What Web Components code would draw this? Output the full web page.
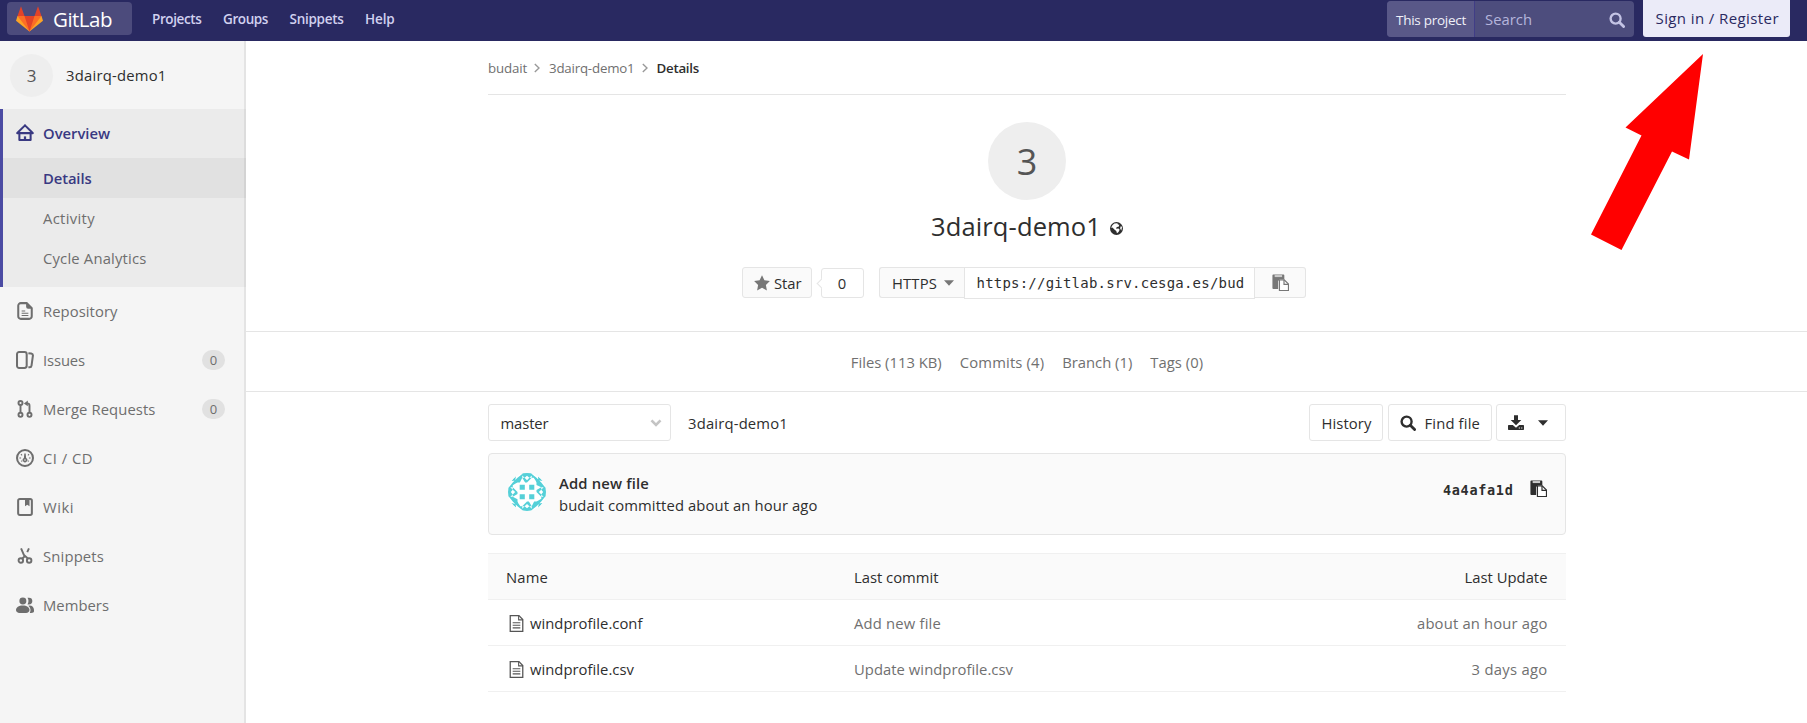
<!DOCTYPE html>
<html lang="en">
<head>
<meta charset="utf-8">
<title>3dairq-demo1</title>
<style>
html,body{margin:0;height:100%;overflow:hidden;background:#fff}
body{font-family:"Open Sans","Noto Sans",sans-serif;font-size:14.800px;color:#2e2e2e}
</style>
</head>
<body>
<project-page></project-page>
<script>
const define = (name, html, setup) => {
  const tpl = document.createElement('template');
  tpl.innerHTML = html;
  customElements.define(name, class extends HTMLElement {
    connectedCallback() {
      if (this.shadowRoot) return;
      this.attachShadow({ mode: 'open' }).append(tpl.content.cloneNode(true));
      if (setup) setup(this, this.shadowRoot);
    }
  });
};

const ICONS = {
  home: '<path d="M8 1.2 1.8 7.3M8 1.2l6.200 6.100M1 8.100h14M3 8v6.200h10V8" fill="none" stroke="currentColor" stroke-width="1.800" stroke-linecap="round" stroke-linejoin="round"/><path d="M7 14v-3h2v3z"/>',
  doc: '<path fill="none" stroke="currentColor" stroke-width="1.800" d="M4.300 1h5.200L14 5.400v7.300a2.300 2.300 0 0 1-2.300 2.300H4.300A2.300 2.300 0 0 1 2 12.700V3.300A2.300 2.300 0 0 1 4.300 1z"/><path d="M9 1v3.300A1.700 1.700 0 0 0 10.700 6H14v-.8L9.800 1z"/><path d="M5 8h3.200M5 10h6M5 12h6" stroke="currentColor" stroke-width=".9"/>',
  issues: '<rect x=".9" y=".9" width="8.600" height="14.200" rx="1.900" fill="none" stroke="currentColor" stroke-width="1.800"/><path d="M11 1.900l2.500.4c1 .2 1.700 1 1.500 2L13.800 13c-.1.900-.8 1.500-1.600 1.500H11" fill="none" stroke="currentColor" stroke-width="1.800"/>',
  merge: '<g fill="none" stroke="currentColor" stroke-width="1.700"><circle cx="4" cy="2.700" r="1.800"/><circle cx="4" cy="13.200" r="1.800"/><circle cx="12" cy="13.200" r="1.800"/><path d="M4 4.500v7M12 11.400V5a2 2 0 0 0-2-2H9"/></g><path d="M7 3l3.500-2.600v5.200z"/>',
  gauge: '<circle cx="8" cy="8" r="7.100" fill="none" stroke="currentColor" stroke-width="1.800"/><path d="M7.400 4h1.200l.4 4a2 2 0 1 1-2 0z"/><circle cx="8" cy="9.700" r=".7" fill="#f5f5f5"/><path d="M3 8h1.500M11.500 8H13M4.400 4.600l1 1M11.600 4.600l-1 1M4.600 11l1-.6M11.400 11l-1-.6" stroke="currentColor" stroke-width=".9"/>',
  book: '<rect x="1.900" y=".9" width="12.200" height="14.200" rx="1.500" fill="none" stroke="currentColor" stroke-width="1.800"/><path d="M8 1h4v6.400L10 6 8 7.400z"/>',
  scissors: '<g fill="none" stroke="currentColor" stroke-width="1.700"><circle cx="4.300" cy="12" r="2"/><circle cx="11.700" cy="12" r="2"/><path d="M4.500 1.200 7 7l3.800 3.500M11.500 1.200 10 4.500M8 8l-2.800 2.600"/></g>',
  members: '<path d="M11.500 7.500a2.700 2.700 0 0 0 0-6h-1.300c1.200 1.800 1.200 4.200 0 6zM12 8.500c2.500 0 4 1.600 4 4v1c0 .9-1 1.500-2.500 1.500h-1.200c1.200-2.500.6-5-1.300-6.400z"/><circle cx="6.100" cy="4.400" r="3.100"/><path d="M6 8.500c3.600 0 6 1.700 6 4 0 1.700-1.400 2.500-3 2.500H3c-1.600 0-3-.8-3-2.500 0-2.300 2.400-4 6-4z"/>',
  search: '<circle cx="6.600" cy="6.600" r="5" fill="none" stroke="currentColor" stroke-width="2.400"/><path d="M10.300 10.300l4.300 4.300" stroke="currentColor" stroke-width="2.800" stroke-linecap="round"/>',
  star: '<path d="M8 .2l2.400 5 5.500.8-4 3.900 1 5.500L8 12.800l-4.900 2.600 1-5.500L.1 6l5.500-.8z"/>',
  globe: '<circle cx="8" cy="8" r="8"/><path d="M5.400 1.800 9 1.500l.8 1.600 1.700.3-.9 2.400-2.300.2-.8 2.200 3-.3 1.400 1.500-1.400 2.900-1.900 1.500-.9-2.700-2-1.600L3 6.900 1.600 7.500c.2-2.200 1.700-4.500 3.800-5.700zM13.500 4.600l1.300 2.200-1 3.800-1.400-3z" fill="#fff"/>',
  paste: '<path d="M1.200.5h9.600c.5 0 .8.300.8.800V5H7.500L5.800 6.700V14H1.200c-.5 0-.8-.3-.8-.8V1.300c0-.5.300-.8.800-.8z"/><path d="M2.500 1h7v1.900h-7z" fill="#ccc"/><path d="M7 5.500h4.500l4 4v6H7z" fill="#fff" stroke="currentColor" stroke-width="1.100"/><path d="M11.300 5.500v4.200h4.200" fill="none" stroke="currentColor" stroke-width="1.100"/>',
  download: '<path d="M6 .3h4V5h3.300L8 10.300 2.700 5H6z"/><path d="M.7 10h4.100L8 12.800 11.200 10h4.100c.4 0 .7.300.7.700v3.600c0 .4-.3.700-.7.700H.7a.7.700 0 0 1-.7-.7v-3.600c0-.4.300-.7.700-.7z"/><path d="M10.800 12.500h1.100v1.100h-1.100zm2.400 0h1.100v1.100h-1.100z" fill="#fff"/>',
  caret: '<path d="M0 3.500h16l-8 9z"/>',
  chevdown: '<path d="M2 4.500l6 6 6-6" fill="none" stroke="currentColor" stroke-width="3.600"/>',
  chevright: '<path d="M4.500 1.500 11.200 8l-6.700 6.500" fill="none" stroke="currentColor" stroke-width="2.200"/>',
  file: '<path d="M2.100.6h8.200l3.600 3.700v11.100H2.100z" fill="none" stroke="currentColor" stroke-width="1.200"/><path d="M10 .5v4.100h4" fill="none" stroke="currentColor"/><path d="M4.400 7.300h7.200M4.400 9.700h7.200M4.400 12.100h7.200" stroke="currentColor"/>'
};
define('gl-icon', '<style>:host{display:inline-block;flex:none;line-height:0}svg{display:block;width:100%;height:100%;fill:currentColor}</style>', (el, root) => {
  const s = el.getAttribute('size') || 16;
  el.style.width = el.style.height = s + 'px';
  root.innerHTML += '<svg viewBox="0 0 16 16">' + ICONS[el.getAttribute('name')] + '</svg>';
});

/* One line of text, tracked so that it fills the width given in w. */
define('fit-text', '<style>:host{display:block;flex:none;white-space:nowrap}span{display:inline-block}</style><span></span>', (el, root) => {
  const span = root.querySelector('span'), w = +el.getAttribute('w') + 1;
  span.textContent = el.getAttribute('text');
  const n = span.textContent.length;
  const gap = (w - span.getBoundingClientRect().width) / n;
  span.style.letterSpacing = gap.toFixed(3) + 'px';
  el.style.width = w + 'px';
});

define('gl-button', `<style>:host{display:flex;box-sizing:border-box;align-items:center;border:1px solid #e5e5e5;border-radius:3px;background:#fff}</style><slot></slot>`);

define('gl-navbar', `<style>
:host{display:flex;box-sizing:border-box;height:41px;background:#292961;color:#d1d1f0;padding:0 17px 0 7px;align-items:flex-start}
.brand{display:flex;align-items:center;box-sizing:border-box;width:125px;height:33px;margin-top:2px;padding-left:9px;border-radius:4px;background:#4c4b7c;color:#fff}
.brand svg{width:27px;height:26px;margin-right:10px}
.brand fit-text{font-size:20.500px;line-height:30px;margin-top:0}
nav{display:flex;gap:21.500px;margin-left:20px;padding-top:8px;font-weight:600;font-size:13.500px;line-height:22px}
.search{display:flex;width:247px;height:36px;margin:1px 9px 0 auto;border-radius:4px;overflow:hidden;background:#4d4d7d;align-items:center;line-height:22px}
.scope{display:flex;align-items:center;box-sizing:border-box;width:88px;height:36px;padding:2px 0 0 9px;background:#595888;border-right:1px solid #403d86;color:#f0f0f8;font-size:13.500px}
.q{margin:0 0 1px 10px;color:#b5b5dc}.search gl-icon{margin-left:auto;margin-right:9px;margin-top:1px;color:#c3c3e4}
.sign{box-sizing:border-box;width:147px;height:37px;padding:7px 0 0 12.500px;background:#ebebf8;color:#292961;border-radius:0 0 3px 3px;font-size:15px;line-height:22px}
</style>
<div class="brand"><svg viewBox="0 0 27 26"><path fill="#fca326" d="M1.500 10 0 14.800l13.500 10.700L27 14.800 25.500 10z"/><path fill="#fc6d26" d="M1.500 10h24L13.500 25.500z"/><path fill="#e24329" d="M8.500 10h10l-5 15.500zM1.500 10 5 .3 8.500 10zM18.500 10 22 .3 25.500 10z"/></svg><fit-text w="58" text="GitLab"></fit-text></div>
<nav><fit-text w="48.500" text="Projects"></fit-text><fit-text w="44" text="Groups"></fit-text><fit-text w="53" text="Snippets"></fit-text><fit-text w="28.500" text="Help"></fit-text></nav>
<div class="search"><div class="scope"><fit-text w="69" text="This project"></fit-text></div><fit-text class="q" w="46" text="Search"></fit-text><gl-icon name="search" size="16"></gl-icon></div>
<div class="sign"><fit-text w="122.500" text="Sign in / Register"></fit-text></div>`);

define('side-item', `<style>
:host{display:flex;height:49px;align-items:center;padding:0 21px 1px 16px;box-sizing:border-box;color:#6e6e6e}
:host([active]){color:#393982;font-weight:600}
.icon{display:flex;margin-right:9px}.label{display:flex;flex:1;line-height:20px;padding-bottom:1px}
.badge{display:flex;align-items:center;justify-content:center;width:23px;height:20px;border-radius:10px;background:#e1e1e1;font-size:13px}
</style><div class="icon"></div><div class="label"></div>`, (el, root) => {
  const a = n => el.getAttribute(n);
  root.querySelector('.icon').innerHTML = `<gl-icon size="18" name="${a('icon')}"></gl-icon>`;
  root.querySelector('.label').innerHTML = `<fit-text w="${a('w')}" text="${a('label')}"></fit-text>`;
  if (el.hasAttribute('count')) {
    const b = document.createElement('span');
    b.className = 'badge';
    b.textContent = a('count');
    root.append(b);
  }
});
define('side-sub', `<style>:host{display:flex;height:40px;align-items:center;padding-left:40px;color:#6e6e6e}
:host([active]){background:#e1e1e1;color:#393982;font-weight:600;box-shadow:inset -2px 0 #d3d3d3}</style><slot></slot>`);

define('gl-sidebar', `<style>
:host{display:block;box-sizing:border-box;width:246px;background:#f5f5f5;box-shadow:inset -2px 0 #e4e4e4}
.head{display:flex;align-items:center;height:68px;box-sizing:border-box;padding-left:10px;font-weight:500}
.av{width:43px;height:43px;border-radius:50%;background:#eee;color:#555;font-size:17px;font-weight:400;text-align:center;line-height:43px;margin-right:13px}
.group{background:rgba(0,0,0,.04);border-left:3px solid #4b4ba3;padding-bottom:9px;box-shadow:inset -2px 0 #dcdcdc}
.group side-item{padding-left:13px}
</style>
<div class="head"><div class="av">3</div><fit-text w="99.500" text="3dairq-demo1"></fit-text></div>
<div class="group"><side-item active icon="home" label="Overview" w="66"></side-item>
<side-sub active><fit-text w="47.500" text="Details"></fit-text></side-sub>
<side-sub><fit-text w="51" text="Activity"></fit-text></side-sub>
<side-sub><fit-text w="102.500" text="Cycle Analytics"></fit-text></side-sub></div>
<side-item icon="doc" label="Repository" w="73.500"></side-item>
<side-item icon="issues" label="Issues" w="41" count="0"></side-item>
<side-item icon="merge" label="Merge Requests" w="111.500" count="0"></side-item>
<side-item icon="gauge" label="CI / CD" w="49"></side-item>
<side-item icon="book" label="Wiki" w="30"></side-item>
<side-item icon="scissors" label="Snippets" w="60"></side-item>
<side-item icon="members" label="Members" w="65"></side-item>`);

define('gl-crumbs', `<style>:host{display:flex;align-items:center;height:54px;box-sizing:border-box;border-bottom:1px solid #e5e5e5;font-size:13.300px;color:#707070}
gl-icon{margin:0 7px 0 5px;color:#999}.on{color:#2e2e2e;font-weight:600}</style>
<fit-text w="38" text="budait"></fit-text><gl-icon name="chevright" size="10"></gl-icon><fit-text w="84.500" text="3dairq-demo1"></fit-text><gl-icon name="chevright" size="10"></gl-icon><fit-text class="on" w="41.500" text="Details"></fit-text>`);

define('project-home', `<style>
:host{display:flex;flex-direction:column;align-items:center;height:236px;box-sizing:border-box;padding-top:27px}
.av{width:78px;height:78px;border-radius:50%;background:#eee;color:#555;font-size:36px;line-height:79px;text-align:center}
.title{display:flex;align-items:center;height:36px;margin-top:8px;font-size:25.500px}
.title gl-icon{margin:5px 0 0 9px}
.row{display:flex;align-items:flex-start;margin-top:23px;margin-right:7px}
gl-button{height:31px;background:#fafafa}
.star{width:70px;padding-left:11px;gap:4.500px}.star gl-icon{color:#777}
.count{position:relative;width:43px;height:30px;margin:1px 15px 0 9px;justify-content:center;background:#fff;line-height:1}
.count::before{content:"";position:absolute;left:-4px;top:11px;width:6px;height:6px;background:#fff;border:1px solid #e5e5e5;border-width:0 0 1px 1px;transform:rotate(45deg)}
.http{width:85px;padding-left:12.500px;gap:7px;border-radius:3px 0 0 3px;border-right:0}.http gl-icon{color:#777}
.url{display:flex;align-items:center;box-sizing:border-box;width:291px;height:32px;border:1px solid #e5e5e5;padding-left:12px;font:14px "DejaVu Sans Mono",monospace}
.copy{width:51px;border-radius:0 3px 3px 0;border-left:0;padding-left:17px;color:#777}
</style>
<div class="av">3</div>
<div class="title"><fit-text w="169" text="3dairq-demo1"></fit-text><gl-icon name="globe" size="13"></gl-icon></div>
<div class="row"><gl-button class="star"><gl-icon name="star" size="16"></gl-icon><fit-text w="26.500" text="Star"></fit-text></gl-button>
<gl-button class="count">0</gl-button>
<gl-button class="http"><fit-text w="44" text="HTTPS"></fit-text><gl-icon name="caret" size="10"></gl-icon></gl-button>
<div class="url"><fit-text w="267" text="https://gitlab.srv.cesga.es/bud"></fit-text></div>
<gl-button class="copy"><gl-icon name="paste" size="17"></gl-icon></gl-button></div>`);

define('project-stats', `<style>:host{display:flex;justify-content:center;align-items:center;gap:18px;height:61px;box-sizing:border-box;border:1px solid #e5e5e5;border-width:1px 0;color:#707070;line-height:20px;padding:1px 0 0 1px}</style>
<fit-text w="90" text="Files (113 KB)"></fit-text><fit-text w="83.500" text="Commits (4)"></fit-text><fit-text w="69" text="Branch (1)"></fit-text><fit-text w="52" text="Tags (0)"></fit-text>`);

define('tree-controls', `<style>:host{display:flex;height:37px;margin-top:12px}
gl-button{height:37px}
.ref{width:183px;padding:1px 8px 0 11.500px;justify-content:space-between}.ref gl-icon{color:#c4c4c4}
.path{display:flex;align-items:center;margin:1px auto 0 17px}
.his{width:74px;padding:1px 0 0 11.500px;margin-right:5px}.find{width:104px;padding:1px 0 0 10.500px;gap:9px;margin-right:4px}.dl{width:70px;padding-left:11px;gap:14px}
</style>
<gl-button class="ref"><fit-text w="47" text="master"></fit-text><gl-icon name="chevdown" size="12"></gl-icon></gl-button>
<div class="path"><fit-text w="99" text="3dairq-demo1"></fit-text></div>
<gl-button class="his"><fit-text w="49" text="History"></fit-text></gl-button>
<gl-button class="find"><gl-icon name="search" size="16"></gl-icon><fit-text w="54.500" text="Find file"></fit-text></gl-button>
<gl-button class="dl"><gl-icon name="download" size="16"></gl-icon><gl-icon name="caret" size="10"></gl-icon></gl-button>`);

define('identi-con', `<style>:host{display:block;width:38px;height:38px;margin-right:1px;border-radius:50%;overflow:hidden;background:#fff;color:#55d0d8}svg{display:block;fill:currentColor}</style>
<svg width="38" height="38" viewBox="0 0 40 40"></svg>`, (el, root) => {
  const quarter = '<path d="M12.300 12.300h5.400v5.400h-5.400zM15 0h5v3L17.500 5 15 2.500zM10 5l5-4v4l-2.500 5H10zM15 5h2.500L20 7.500V10h-2zM0 15h2.500L5 17.500 3 20H0zM5 10v5H1zM5 15l5-2.500L5 15v2.500L7.500 20H10zM5 10l5-5v5L8 11l-3 2zM3.500 8.500l5-5.500-1 5z"/>';
  root.querySelector('svg').innerHTML = [0, 90, 180, 270].map(r => `<g transform="rotate(${r} 20 20)">${quarter}</g>`).join('');
});

define('commit-card', `<style>:host{display:flex;box-sizing:border-box;height:82px;margin-top:12px;border:1px solid #e5e5e5;border-radius:4px;background:#fafafa;padding:19px 18px 0 19px}
.msg{margin:-1px auto 0 12px;line-height:22px}.t{font-weight:600}
.sha{font:bold 13.500px/20px "DejaVu Sans Mono",monospace;margin:7px 16.500px 0 0}gl-icon{margin-top:7px}</style>
<identi-con></identi-con><div class="msg"><fit-text class="t" w="89" text="Add new file"></fit-text><fit-text w="257.500" text="budait committed about an hour ago"></fit-text></div>
<fit-text class="sha" w="69.500" text="4a4afa1d"></fit-text><gl-icon name="paste" size="17"></gl-icon>`);

define('tree-row', `<style>:host{display:grid;grid-template-columns:348px 1fr auto;align-items:center;box-sizing:border-box;height:46px;border-bottom:1px solid #f0f0f0;padding:1px 18.500px 0 18px;color:#707070}
:host([head]){height:47px;border-top:1px solid #f0f0f0;background:#fafafa;color:#2e2e2e}
.n{display:flex;align-items:center;gap:5.500px;color:#2e2e2e}gl-icon{margin-left:1.500px;color:#555}</style>
<div class="n"></div><div class="c"></div><div class="u"></div>`, (el, root) => {
  const cell = (k, t, w) => root.querySelector(k).innerHTML += `<fit-text w="${w}" text="${t}"></fit-text>`;
  if (!el.hasAttribute('head')) root.querySelector('.n').innerHTML = '<gl-icon name="file" size="17"></gl-icon>';
  const [n, nw, c, cw, u, uw] = el.getAttribute('cells').split('|');
  cell('.n', n, nw); cell('.c', c, cw); cell('.u', u, uw);
});

define('callout-arrow', `<style>:host{position:absolute;left:1590px;top:53px;width:114px;height:199px;pointer-events:none}svg{display:block}</style>
<svg width="114" height="199" viewBox="1590 53 114 199"><path fill="#f00" d="M1703 54 1689 159.500 1672 151.500 1621.500 250 1591 234.500 1641.500 135.500 1625.500 127.500z"/></svg>`);

define('project-page', `<style>
:host{display:grid;grid-template:41px 1fr/246px 1fr;height:100vh;position:relative}
gl-navbar{grid-column:1/3}
main{display:block;min-width:0}.wrap{display:block;width:1078px;margin:0 auto 0 242px}
.table{margin-top:18px}
</style>
<gl-navbar></gl-navbar><gl-sidebar></gl-sidebar>
<main><div class="wrap"><gl-crumbs></gl-crumbs><project-home></project-home></div>
<project-stats></project-stats>
<div class="wrap"><tree-controls></tree-controls><commit-card></commit-card>
<div class="table">
<tree-row head cells="Name|41|Last commit|83.500|Last Update|82"></tree-row>
<tree-row cells="windprofile.conf|111.500|Add new file|86|about an hour ago|129.500"></tree-row>
<tree-row cells="windprofile.csv|103|Update windprofile.csv|158|3 days ago|75"></tree-row>
</div></div></main><callout-arrow></callout-arrow>`);
</script>
</body>
</html>
